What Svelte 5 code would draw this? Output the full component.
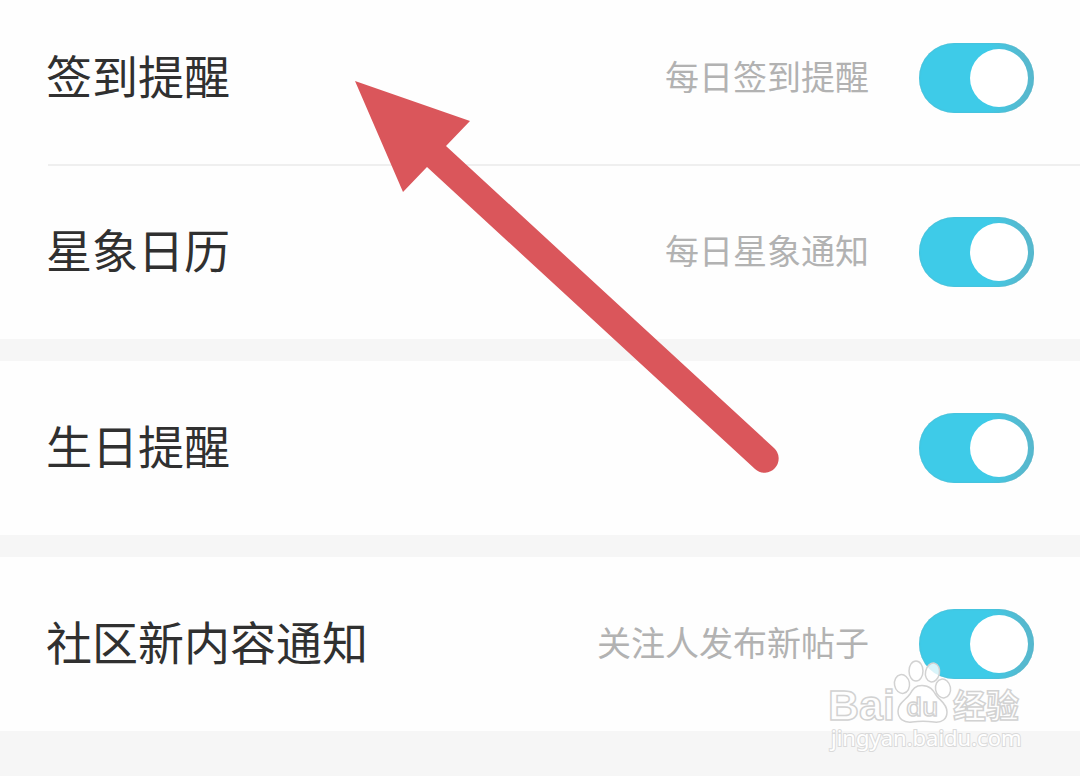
<script>
  let groups = $state([
    [
      { id: 'checkin', label: '签到提醒', hint: '每日签到提醒', on: true },
      { id: 'astro', label: '星象日历', hint: '每日星象通知', on: true }
    ],
    [{ id: 'birthday', label: '生日提醒', hint: '', on: true }],
    [{ id: 'community', label: '社区新内容通知', hint: '关注人发布新帖子', on: true }]
  ]);
</script>

<main class="settings">
  {#each groups as group}
    <section class="group">
      {#each group as item}
        <div class="row">
          <label class="label" for={item.id}>{item.label}</label>
          {#if item.hint}<span class="hint">{item.hint}</span>{/if}
          <input class="switch" type="checkbox" id={item.id} bind:checked={item.on} />
        </div>
      {/each}
    </section>
  {/each}

  <svg class="arrow" viewBox="0 0 426 394" aria-hidden="true">
    <path d="M1 1 L116 41 L92 66 L420 368 A14 14 0 0 1 401 389 L73 87 L49 112 Z" />
  </svg>

  <svg class="watermark" viewBox="0 0 204 100" aria-hidden="true">
    <g class="mark">
      <text x="2" y="62" class="latin">Bai</text>
      <ellipse cx="76" cy="26" rx="7.5" ry="9.5" transform="rotate(-10 76 26)" />
      <ellipse cx="90" cy="13" rx="7" ry="10" />
      <ellipse cx="106.5" cy="14.5" rx="7" ry="9.5" transform="rotate(12 106.5 14.5)" />
      <ellipse cx="117" cy="30.5" rx="7.5" ry="9.5" transform="rotate(-10 117 30.5)" />
      <path d="M96 27.5 C104 27.5 107 32 110 37 C113 42 121 45 121 54 C121 61 116 65 108 64 C101 63 93 63 86 64 C78 65 72 61 72 53 C72 45 80 42 84 36 C87 31 89 27.5 96 27.5 Z" />
      <text x="80" y="58" class="du">du</text>
      <text x="127" y="60" class="cjk">经验</text>
      <text x="5" y="88" class="url">jingyan.baidu.com</text>
    </g>
  </svg>
</main>

<style>
  :global(body) {
    margin: 0;
    background: #f6f6f6;
  }

  .settings {
    position: relative;
    display: flex;
    flex-direction: column;
    gap: 22px;
    min-height: calc(100vh + 9px);
    margin-top: -9px;
    font-family: "Noto Sans CJK SC", sans-serif;
  }

  .group {
    background: #fefefe;
  }

  .row {
    position: relative;
    display: flex;
    align-items: center;
    box-sizing: border-box;
    min-height: 174px;
    padding: 0 46px;
  }

  .row + .row::before {
    content: "";
    position: absolute;
    top: -1px;
    left: 48px;
    right: 0;
    height: 2px;
    background: #efefef;
  }

  .label {
    flex: 1;
    padding-bottom: 8px;
    font-size: 46px;
    line-height: 64px;
    color: #303030;
  }

  .hint {
    padding-bottom: 4px;
    font-size: 34px;
    line-height: 48px;
    color: #b2b2b2;
  }

  .switch {
    appearance: none;
    flex: none;
    display: flex;
    align-items: center;
    justify-content: flex-start;
    box-sizing: border-box;
    width: 115px;
    height: 70px;
    margin: 0 0 0 50px;
    padding: 0 6px;
    border-radius: 35px;
    background: #d8d8d8;
  }

  .switch:checked {
    justify-content: flex-end;
    background: linear-gradient(90deg, #3ecbe8 60%, #56b9cf 90%);
    box-shadow: inset 0 0 2px #5db4c6;
  }

  .switch::before {
    content: "";
    width: 58px;
    height: 58px;
    border-radius: 50%;
    background: #fff;
  }

  .arrow {
    position: absolute;
    top: 89px;
    left: 354px;
    width: 426px;
    height: 394px;
    fill: #da565b;
    pointer-events: none;
  }

  .watermark {
    position: absolute;
    top: 667px;
    right: 50px;
    width: 204px;
    height: 100px;
    pointer-events: none;
  }

  .mark {
    fill: #fff;
    fill-opacity: 0.8;
    stroke: #d2d2d2;
    stroke-width: 1.5;
  }

  .latin {
    font: 700 43px "Liberation Sans", sans-serif;
  }

  .du {
    font: 500 26px "Noto Sans", sans-serif;
  }

  .cjk {
    font: 700 33px "Noto Sans CJK SC", sans-serif;
  }

  .url {
    font: 400 22px "Noto Sans", sans-serif;
    stroke: #dadada;
    paint-order: stroke;
    stroke-width: 2;
    fill-opacity: 1;
  }
</style>
